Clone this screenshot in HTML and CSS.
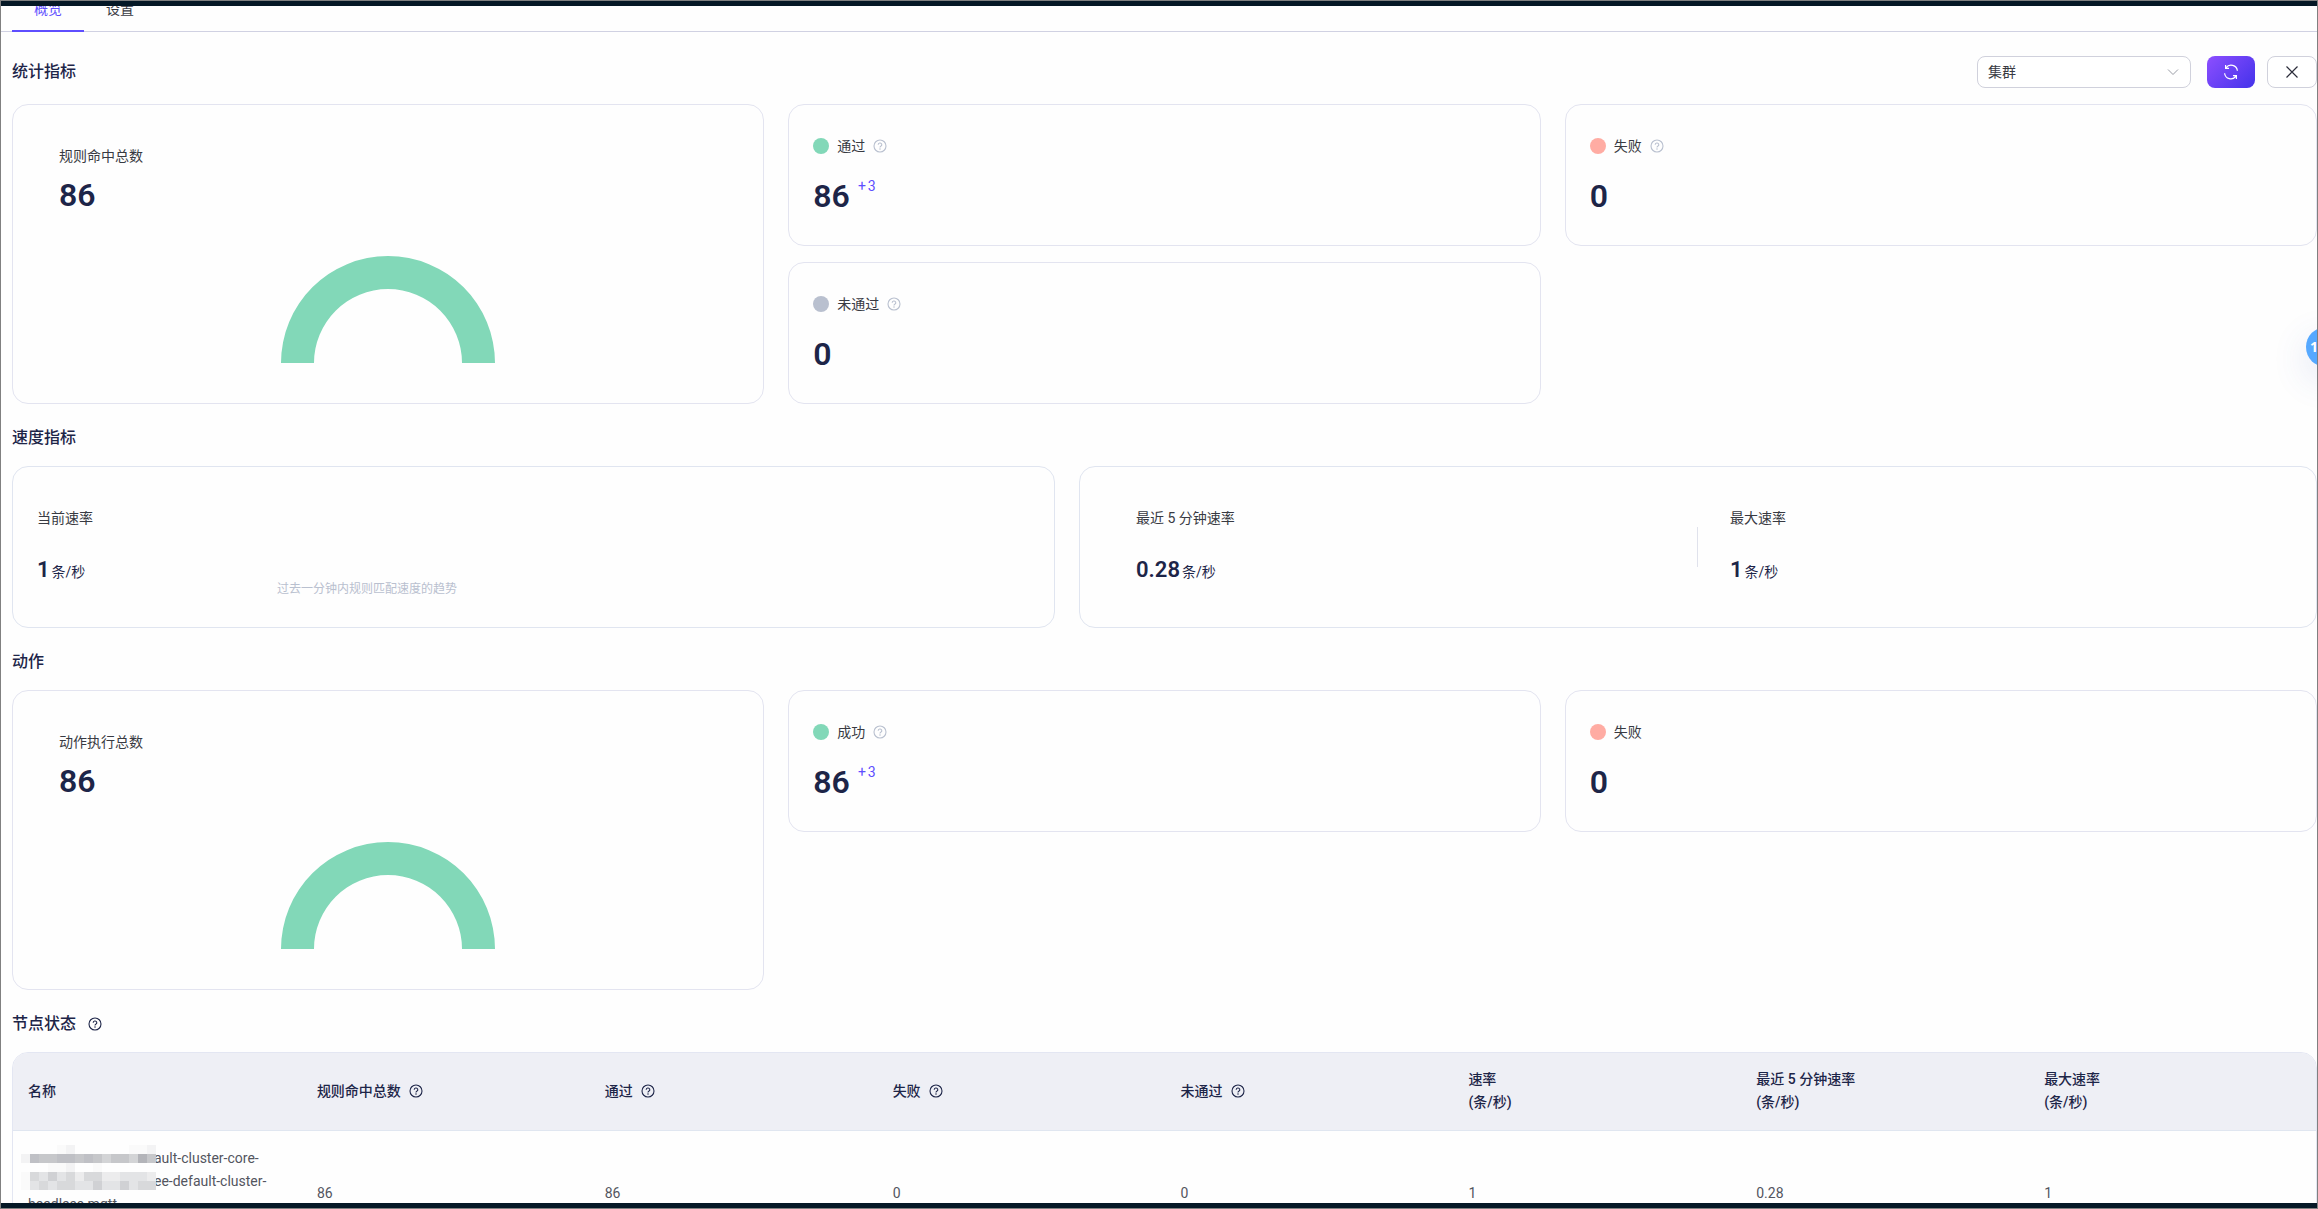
FILE: index.html
```html
<!DOCTYPE html>
<html lang="zh-CN">
<head>
<meta charset="utf-8">
<title>规则概览</title>
<link rel="stylesheet" href="styles.css">
</head>
<body>
<svg class="defs" width="0" height="0" aria-hidden="true">
  <symbol id="help" viewBox="0 0 14 14">
    <circle cx="7" cy="7" r="6" fill="none" stroke="currentColor" stroke-width="1.1"/>
    <path d="M5.2 5.7a1.8 1.7 0 1 1 2.6 1.5c-.6.3-.8.6-.8 1.2" fill="none" stroke="currentColor" stroke-width="1.1"/>
    <circle cx="7" cy="10" r=".75" fill="currentColor"/>
  </symbol>
</svg>
<div class="edge"></div>
<div class="page">
  <nav class="tabs">
    <a class="tab active" href="#overview">概览</a>
    <a class="tab" href="#settings">设置</a>
  </nav>
  <main class="content">
    <div class="toolbar">
      <h2>统计指标</h2>
      <div class="select-box">
        <select aria-label="节点"><option>集群</option></select>
        <svg class="arrow" viewBox="0 0 12 8"><path d="M1 1.5l5 5 5-5" fill="none" stroke="#9a9da6"/></svg>
      </div>
      <button class="btn primary" type="button" aria-label="刷新">
        <svg width="16" height="16" viewBox="0 0 16 16" fill="none" stroke="#fff" stroke-width="1.2">
          <path d="M1.6 9.2A6.3 6.3 0 0 0 13 12.2M14.4 6.8A6.3 6.3 0 0 0 3 3.8M2.6 1v3.4H6M13.4 15v-3.4H10"/>
        </svg>
      </button>
      <button class="btn" type="button" aria-label="关闭">
        <svg width="14" height="14" viewBox="0 0 14 14"><path d="M1.5 1.5l11 11m0-11l-11 11" stroke="#2b2d3a" stroke-width="1.2"/></svg>
      </button>
    </div>

    <div class="stats">
      <section class="card total">
        <h3>规则命中总数</h3>
        <div class="num">86</div>
        <svg class="arch" viewBox="0 0 214 107"><path d="M0 107a107 107 0 0 1 214 0h-33a74 74 0 0 0-148 0z" fill="#82d8b8"/></svg>
      </section>
      <section class="card stat">
        <h3><i class="dot green"></i>通过<svg class="help"><use href="#help"/></svg></h3>
        <div class="num">86<span class="delta"><span>+</span><span>3</span></span></div>
      </section>
      <section class="card stat">
        <h3><i class="dot red"></i>失败<svg class="help"><use href="#help"/></svg></h3>
        <div class="num">0</div>
      </section>
      <section class="card stat">
        <h3><i class="dot gray"></i>未通过<svg class="help"><use href="#help"/></svg></h3>
        <div class="num">0</div>
      </section>
    </div>

    <h2>速度指标</h2>
    <div class="speeds">
      <section class="card speed">
        <div class="rate">
          <h3>当前速率</h3>
          <div class="val">1<small>条/秒</small></div>
        </div>
        <p class="trend">过去一分钟内规则匹配速度的趋势</p>
      </section>
      <section class="card speed pair">
        <div class="rate">
          <h3>最近 5 分钟速率</h3>
          <div class="val">0.28<small>条/秒</small></div>
        </div>
        <div class="rate">
          <h3>最大速率</h3>
          <div class="val">1<small>条/秒</small></div>
        </div>
      </section>
    </div>

    <h2>动作</h2>
    <div class="stats">
      <section class="card total">
        <h3>动作执行总数</h3>
        <div class="num">86</div>
        <svg class="arch" viewBox="0 0 214 107"><path d="M0 107a107 107 0 0 1 214 0h-33a74 74 0 0 0-148 0z" fill="#82d8b8"/></svg>
      </section>
      <section class="card stat">
        <h3><i class="dot green"></i>成功<svg class="help"><use href="#help"/></svg></h3>
        <div class="num">86<span class="delta"><span>+</span><span>3</span></span></div>
      </section>
      <section class="card stat">
        <h3><i class="dot red"></i>失败</h3>
        <div class="num">0</div>
      </section>
    </div>

    <h2>节点状态<svg class="help"><use href="#help"/></svg></h2>
    <table>
      <thead>
        <tr>
          <th>名称</th>
          <th>规则命中总数<svg class="help"><use href="#help"/></svg></th>
          <th>通过<svg class="help"><use href="#help"/></svg></th>
          <th>失败<svg class="help"><use href="#help"/></svg></th>
          <th>未通过<svg class="help"><use href="#help"/></svg></th>
          <th>速率<br>(条/秒)</th>
          <th>最近 5 分钟速率<br>(条/秒)</th>
          <th>最大速率<br>(条/秒)</th>
        </tr>
      </thead>
      <tbody>
        <tr>
          <td class="name">
            <span class="masked">ault-cluster-core-</span>
            <span class="masked">ee-default-cluster-</span>
            <span>headless.mqtt</span>
            <svg class="mosaic" viewBox="0 0 15 5" shape-rendering="crispEdges" aria-hidden="true">
              <path fill="#fafafa" d="M4 0h1v1h-1zM12 0h2v1h-2zM3 2h2v1h-2zM8 2h1v1h-1zM0 3h1v2h-1z"/>
              <path fill="#f3f3f4" d="M5 0h1v1h-1zM14 0h1v1h-1zM0 1h1v1h-1zM5 2h1v1h-1z"/>
              <path fill="#c6c7ca" d="M1 1h14v1h-14z"/>
              <path fill="#bfc0c5" d="M1 1h1v1h-1zM4 1h2v1h-2zM7 1h1v1h-1z"/>
              <path fill="#d3d4d6" d="M9 1h1v1h-1zM12 1h1v1h-1z"/>
              <path fill="#b3b4b9" d="M13 1h1v1h-1z"/>
              <path fill="#e3e4e6" d="M1 3h14v2h-14z"/>
              <path fill="#d8d9db" d="M1 3h1v1h-1zM3 3h1v1h-1zM5 3h1v1h-1zM7 3h2v1h-2zM2 4h1v1h-1zM4 4h2v1h-2zM13 4h2v1h-2z"/>
              <path fill="#ececed" d="M6 3h1v1h-1zM9 3h2v1h-2zM14 3h1v1h-1z"/>
              <path fill="#d0d1d4" d="M3 3h1v1h-1zM8 4h1v1h-1zM11 4h1v1h-1z"/>
            </svg>
          </td>
          <td>86</td><td>86</td><td>0</td><td>0</td><td>1</td><td>0.28</td><td>1</td>
        </tr>
      </tbody>
    </table>
  </main>
  <button class="float" type="button">1</button>
</div>
<div class="edge"></div>
</body>
</html>
```
FILE: styles.css
```css
* { box-sizing: border-box; }
body {
  margin: 0;
  height: 100vh;
  display: flex;
  flex-direction: column;
  border: 1px solid #808080;
  background: #fefefe;
  color: #383a42;
  font: 14px/23px Roboto, "Noto Sans CJK SC", sans-serif;
  overflow: hidden;
}
.defs { position: absolute; }
.edge { flex: 0 0 5px; background: #051826; }
.page { flex: 1; min-height: 0; overflow: hidden; position: relative; }

.tabs {
  display: flex;
  align-items: flex-end;
  height: 26px;
  padding-left: 11px;
  overflow: hidden;
  box-shadow: inset 0 -1px #d0d1e2;
}
.tab {
  flex: none;
  height: 44px;
  line-height: 42px;
  padding: 0 22px;
  color: #383a42;
  text-decoration: none;
}
.tab.active { color: #5e4eff; box-shadow: inset 0 -2px #5e4eff; }

.content { padding: 24px 0 0 11px; }
h2, h3, p { margin: 0; font-weight: 400; }
h2 {
  display: flex;
  align-items: center;
  gap: 12px;
  margin: 24px 0 18px;
  font-size: 16px;
  line-height: 20px;
  font-weight: 500;
  color: #1d2548;
}
h3 { font-size: 14px; line-height: 24px; }
.help { width: 14px; height: 14px; flex: none; }

.toolbar { display: flex; align-items: center; margin-bottom: 16px; }
.toolbar h2 { margin: 0 auto 0 0; }
.select-box { position: relative; width: 214px; margin-right: 16px; }
select {
  appearance: none;
  display: block;
  width: 100%;
  height: 32px;
  padding: 0 10px;
  border: 1px solid #d0d1dc;
  border-radius: 8px;
  background: #fff;
  color: #383a42;
  font: inherit;
}
.arrow { position: absolute; right: 12px; top: 12px; width: 12px; height: 8px; }
.btn {
  display: flex;
  align-items: center;
  justify-content: center;
  width: 50px;
  height: 32px;
  padding: 0;
  border: 1px solid #d0d1dc;
  border-radius: 8px;
  background: #fff;
}
.btn.primary {
  width: 48px;
  margin-right: 12px;
  border: 0;
  background: linear-gradient(135deg, #8d4fff, #4332ea);
}

.card { border: 1px solid #e3e4f0; border-radius: 16px; }
.stats {
  display: grid;
  grid-template-columns: repeat(3, 1fr);
  grid-template-rows: 142px 142px;
  gap: 16px 24px;
}
.total { grid-row: span 2; padding: 39px 46px; display: flex; flex-direction: column; }
.num { font-size: 32px; line-height: 40px; font-weight: 600; color: #1d2548; }
.total .num { margin-top: 7px; }
.arch { width: 214px; height: 107px; margin: 41px auto 0; }
.stat { padding: 29px 24px; }
.stat h3 { display: flex; align-items: center; }
.stat .help { margin-left: 8px; color: #b9c0cf; }
.stat .num { display: flex; margin-top: 18px; }
.dot { width: 16px; height: 16px; margin-right: 8px; border-radius: 50%; }
.green { background: #82d8b8; }
.red { background: #ffaca3; }
.gray { background: #b9c0cf; }
.delta {
  display: flex;
  gap: 2px;
  margin-left: 8px;
  font-size: 14px;
  line-height: 20px;
  font-weight: 400;
  color: #5e4eff;
}

.speeds { display: grid; grid-template-columns: 1043fr 1238fr; gap: 24px; }
.speed { display: flex; height: 162px; padding: 39px 24px; border-color: #e0e5f0; }
.val { display: flex; align-items: baseline; margin-top: 20px; font-size: 22px; line-height: 40px; font-weight: 600; color: #1d2548; }
.val small { margin-left: 2px; font-size: 14px; font-weight: 400; }
.trend { flex: none; width: 548px; padding-top: 73px; font-size: 12px; line-height: 20px; text-align: center; color: #b9c0cf; }
.speed:not(.pair) .rate { flex: 0 0 47px; white-space: nowrap; }
.pair .rate { flex: 1; padding-left: 32px; }
.pair .rate:first-child {
  background: linear-gradient(#e0e2ec, #e0e2ec) right 21px / 1px 40px no-repeat;
}

table {
  width: 100%;
  table-layout: fixed;
  border: 1px solid #e3e6f2;
  border-radius: 16px 16px 0 0;
  border-spacing: 0;
  overflow: hidden;
}
th, td { padding: 16px; text-align: left; vertical-align: middle; }
th {
  height: 78px;
  background: #eeeff5;
  border-bottom: 1px solid #e0e6f0;
  color: #1d2548;
  font-weight: 500;
}
th { padding-top: 15px; }
th:first-child, td:first-child { padding-left: 15px; }
th .help { margin-left: 8px; vertical-align: -2px; }
td { height: 124px; color: #53555e; }
.name { position: relative; vertical-align: top; white-space: nowrap; }
.name span { display: block; }
.name .masked { padding-left: 126px; }
.mosaic { position: absolute; left: 8px; top: 14px; width: 135px; height: 45px; }

.float {
  position: absolute;
  right: -29px;
  top: 321px;
  width: 40px;
  height: 40px;
  padding: 0 0 0 4px;
  border: 0;
  border-radius: 50%;
  background: #55a8ff;
  box-shadow: 0 12px 36px rgba(60, 90, 180, .15);
  color: #fff;
  font: 700 14px/40px "Open Sans", sans-serif;
  text-align: left;
}
```
